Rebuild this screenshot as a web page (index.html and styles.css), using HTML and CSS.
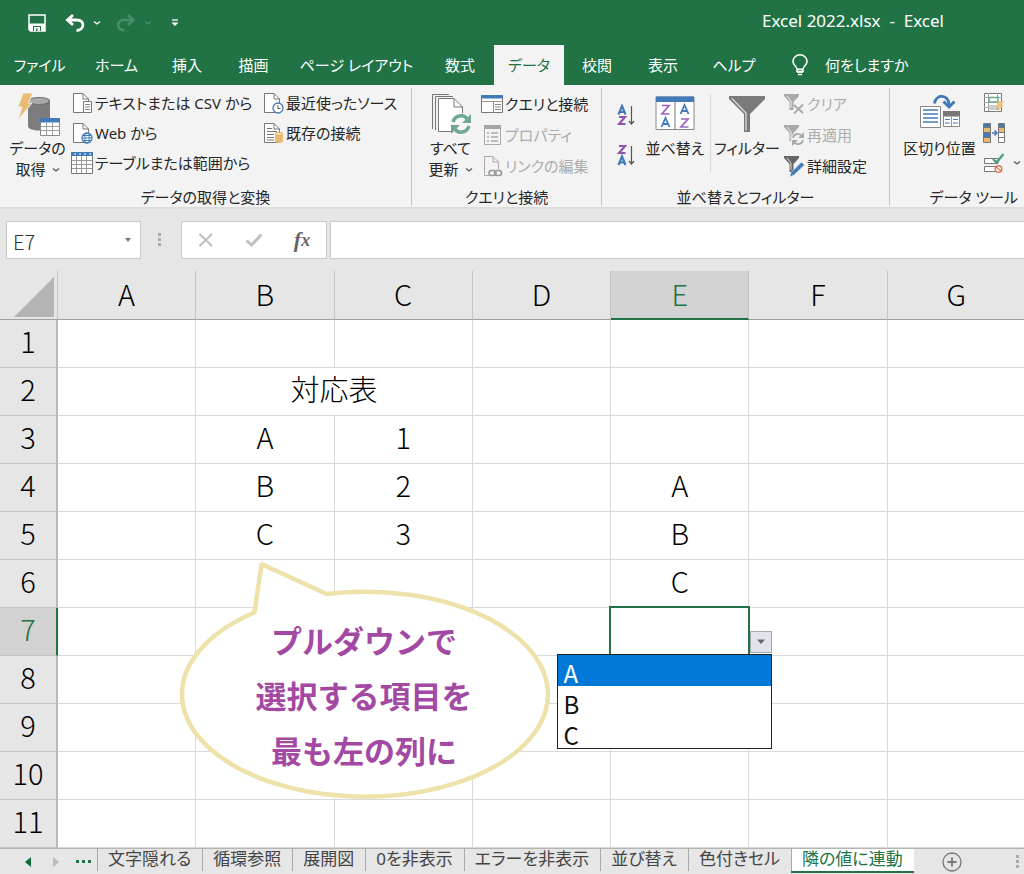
FILE: index.html
```html
<!DOCTYPE html>
<html lang="ja">
<head>
<meta charset="utf-8">
<meta name="viewport" content="width=device-width, initial-scale=1">
<title>Excel 2022.xlsx - Excel</title>
<link rel="stylesheet" href="styles.css">
</head>
<body>
<div class="app">
  <header class="titlebar">
    <div class="quick">
      <button class="plain" aria-label="上書き保存"><svg width="18" height="18" viewBox="0 0 18 18"><path d="M1 1H17V17H2.500L1 15.500Z" fill="none" stroke="#fff" stroke-width="1.500"/><path d="M1 10.500L2.500 9.500H15.500L17 10.500V17H2.500L1 15.500Z" fill="#fff"/><path d="M5 12H13V17H5Z" fill="#217346"/><path d="M6 13H12V17H9.500V14.500H8V17H6Z" fill="#fff"/></svg></button>
      <button class="plain undo" aria-label="元に戻す"><svg width="20" height="18" viewBox="0 0 20 18"><path d="M8 1L2.500 6L8 11M3 6H12C20 6 20 16 11.500 16.500" fill="none" stroke="#fff" stroke-width="2.800"/></svg><svg width="8" height="6" viewBox="0 0 8 6"><path d="M1 1.500L4 4L7 1.500" fill="none" stroke="#fff" stroke-width="1.300"/></svg></button>
      <button class="plain redo" aria-label="やり直し" disabled><svg width="20" height="18" viewBox="0 0 20 18"><path d="M12 1L17.500 6L12 11M17 6H8C0 6 0 16 8.500 16.500" fill="none" stroke="#4b8f6a" stroke-width="2.600"/></svg><svg width="8" height="6" viewBox="0 0 8 6"><path d="M1 1.500L4 4L7 1.500" fill="none" stroke="#4b8f6a" stroke-width="1.300"/></svg></button>
      <button class="plain" aria-label="クイック アクセス ツール バーのユーザー設定"><svg width="8" height="8" viewBox="0 0 8 8"><path d="M1 1H7" stroke="#fff" stroke-width="1.300"/><path d="M.5 3.500H7.500L4 7Z" fill="#fff"/></svg></button>
    </div>
    <h1 class="title">Excel 2022.xlsx&nbsp; -&nbsp; Excel</h1>
  </header>

  <nav class="tabs">
    <a href="#file">ファイル</a>
    <a href="#home">ホーム</a>
    <a href="#insert">挿入</a>
    <a href="#draw">描画</a>
    <a href="#layout">ページ レイアウト</a>
    <a href="#formula">数式</a>
    <a href="#data" class="current" aria-current="page">データ</a>
    <a href="#review">校閲</a>
    <a href="#view">表示</a>
    <a href="#help">ヘルプ</a>
    <a href="#tell" class="tell"><svg width="18" height="22" viewBox="0 0 18 22"><path d="M6 15.500C6 12 2 11.500 2 7.500A7 6.700 0 0 1 16 7.500C16 11.500 12 12 12 15.500V17.500H6ZM6 15.200H12" fill="none" stroke="#fff" stroke-width="1.500"/><path d="M6 18H12M7 20.500H11" stroke="#fff" stroke-width="1.500"/></svg>何をしますか</a>
  </nav>

  <section class="ribbon" aria-label="データ">
    <div class="group get">
      <div class="tools">
        <button class="big"><svg width="44" height="44" viewBox="0 0 44 44"><path d="M12 9V34C12 40 34 40 34 34V9Z" fill="#7c7c7c"/><ellipse cx="23" cy="9" rx="10.500" ry="3.500" fill="#a9a9a9" stroke="#6f6f6f" stroke-width="1.200"/><path d="M7 1H17L12.500 11H16L2 28L6 15H2Z" fill="#e9bb72" stroke="#f2f2f2"/><path d="M24.500 26.500H43.500V43.500H24.500Z" fill="#fff" stroke="#8a8a8a"/><path d="M24 26H44V30.500H24Z" fill="#437bb9"/><path d="M25 34.500H43M25 38.500H43M30.500 31V43M36.500 31V43" stroke="#a0a0a0"/></svg><span>データの<br>取得<svg class="chev" width="8" height="6" viewBox="0 0 8 6"><path d="M1 1.500L4 4L7 1.500" fill="none" stroke="#555" stroke-width="1.200"/></svg></span></button>
        <div class="list">
          <button><svg width="22" height="22" viewBox="0 0 22 22"><path d="M2.500 1.500H12L17.500 7V20.500H2.500Z" fill="#fff" stroke="#777"/><path d="M12 1.500V7H17.500" fill="none" stroke="#777"/><path d="M12.500 9.500H20.500V20.500H12.500Z" fill="#fff" stroke="#777"/><path d="M14 12.500H19M14 15H19M14 17.500H19" stroke="#888"/></svg>テキストまたは CSV から</button>
          <button><svg width="22" height="22" viewBox="0 0 22 22"><path d="M2.500 1.500H12L17.500 7V20.500H2.500Z" fill="#fff" stroke="#777"/><path d="M12 1.500V7H17.500" fill="none" stroke="#777"/><circle cx="16" cy="16" r="5" fill="#fff" stroke="#437bb9" stroke-width="1.300"/><ellipse cx="16" cy="16" rx="2.200" ry="5" fill="none" stroke="#437bb9"/><path d="M11 16H21M12 13.500H20M12 18.500H20" stroke="#437bb9"/></svg>Web から</button>
          <button><svg width="22" height="22" viewBox="0 0 22 22"><path d="M.5.500H21.500V21.500H.5Z" fill="#fff" stroke="#777"/><path d="M0 0H22V4H0Z" fill="#437bb9"/><path d="M1 8.500H21M1 12.500H21M1 16.500H21M5.500 4V21M10.500 4V21M15.500 4V21" stroke="#999"/><path d="M3 2H5M8 2H10M13 2H15M18 2H20" stroke="#fff"/></svg>テーブルまたは範囲から</button>
        </div>
        <div class="list">
          <button><svg width="22" height="22" viewBox="0 0 22 22"><path d="M2.500 1.500H12L17.500 7V20.500H2.500Z" fill="#fff" stroke="#777"/><path d="M12 1.500V7H17.500" fill="none" stroke="#777"/><circle cx="16" cy="16" r="5" fill="#fff" stroke="#437bb9" stroke-width="1.300"/><path d="M16 13V16.500H18.500" fill="none" stroke="#555"/></svg>最近使ったソース</button>
          <button><svg width="22" height="22" viewBox="0 0 22 22"><path d="M2.500 1.500H12L17.500 7V20.500H2.500Z" fill="#fff" stroke="#777"/><path d="M12 1.500V7H17.500M5 6.500H10M5 9.500H15M5 12.500H12M5 15.500H12M5 18H12" fill="none" stroke="#777"/><path d="M13 12V19C13 21.500 21 21.500 21 19V12Z" fill="#e9bb72"/><ellipse cx="17" cy="12" rx="4" ry="1.700" fill="#f6ddb1" stroke="#e2ae5e"/></svg>既存の接続</button>
        </div>
      </div>
      <h2>データの取得と変換</h2>
    </div>

    <div class="group queries">
      <div class="tools">
        <button class="big"><svg width="42" height="44" viewBox="0 0 42 44"><path d="M2.500 37V2.500H19M5.500 38V4.500H23" fill="none" stroke="#777"/><path d="M8.500 6.500H24L32.500 15V39.500H8.500Z" fill="#fff" stroke="#777"/><path d="M24 6.500V15H32.500" fill="none" stroke="#777"/><circle cx="31" cy="32" r="11" fill="#f7f7f7"/><path d="M23 30C25 23 34 22 37 27M39 34C37 41 28 42 25 37" fill="none" stroke="#70a991" stroke-width="3.500"/><path d="M41 22V31H32ZM21 42V33H30Z" fill="#70a991"/></svg><span>すべて<br>更新<svg class="chev" width="8" height="6" viewBox="0 0 8 6"><path d="M1 1.500L4 4L7 1.500" fill="none" stroke="#555" stroke-width="1.200"/></svg></span></button>
        <div class="list">
          <button><svg width="22" height="22" viewBox="0 0 22 22"><path d="M.5 2.500H21.500V19.500H.5Z" fill="#fff" stroke="#777"/><path d="M0 2H22V5.500H0Z" fill="#437bb9"/><path d="M12.500 9V19M1 8.500H21" stroke="#999"/><path d="M14 11.500H20M14 14H20M14 16.500H20" stroke="#888"/></svg>クエリと接続</button>
          <button disabled><svg width="22" height="22" viewBox="0 0 22 22"><path d="M3.500 1.500H19.500V20.500H3.500Z" fill="#f5f1f5" stroke="#aaa"/><path d="M3 1H20V5H3Z" fill="#a6a6a6"/><path d="M6 9H8M10 9H17M6 13H8M10 13H17M6 17H8M10 17H17" stroke="#aaa" stroke-width="1.300"/></svg>プロパティ</button>
          <button disabled><svg width="22" height="22" viewBox="0 0 22 22"><path d="M8 20.500H3.500V1.500H12L17.500 7V14" fill="#f5f1f5" stroke="#aaa"/><path d="M12 1.500V7H17.500" fill="none" stroke="#aaa"/><rect x="8" y="15.500" width="7" height="5" rx="2.500" fill="none" stroke="#999" stroke-width="1.600"/><rect x="13.500" y="15.500" width="7" height="5" rx="2.500" fill="none" stroke="#999" stroke-width="1.600"/></svg>リンクの編集</button>
        </div>
      </div>
      <h2>クエリと接続</h2>
    </div>

    <div class="group sort">
      <div class="tools">
        <div class="order">
          <button aria-label="昇順"><svg width="18" height="22" viewBox="0 0 18 22"><path d="M1.500 10.500L5 2L8.500 10.500M3 8H7" fill="none" stroke="#437bb9" stroke-width="2.200"/><path d="M2 13H8L2 20H8.500" fill="none" stroke="#8c55ab" stroke-width="2.200"/><path d="M14.500 2V20M12 17L14.500 20L17 17" fill="none" stroke="#555" stroke-width="1.200"/></svg></button>
          <button aria-label="降順"><svg width="18" height="22" viewBox="0 0 18 22"><path d="M2 2H8L2 9H8.500" fill="none" stroke="#8c55ab" stroke-width="2.200"/><path d="M1.500 21L5 12.500L8.500 21M3 18.500H7" fill="none" stroke="#437bb9" stroke-width="2.200"/><path d="M14.500 2V20M12 17L14.500 20L17 17" fill="none" stroke="#555" stroke-width="1.200"/></svg></button>
        </div>
        <button class="big"><svg width="40" height="42" viewBox="0 0 40 42"><path d="M1 3H39V35.500H1Z" fill="#fff" stroke="#888"/><path d="M1 2.500H39V8H1Z" fill="#437bb9"/><path d="M20 8V36" stroke="#777"/><path d="M7 11.500H14L7 20H14.500M26 25H33L26 33H33.500" fill="none" stroke="#9e63bb" stroke-width="1.700"/><path d="M6.500 33L10.500 24L14.500 33M8 30H13M25.500 20L29.500 11L33.500 20M27 17H32" fill="none" stroke="#437bb9" stroke-width="1.800"/></svg><span>並べ替え</span></button>
        <button class="big filter"><svg width="40" height="42" viewBox="0 0 40 42"><path d="M2 2H38V5L23 20V38H17V20L2 5Z" fill="#7a7a7a"/><path d="M5 4.500L19 19V36.500" fill="none" stroke="#d2d2d2" stroke-width="1.500"/></svg><span>フィルター</span></button>
        <div class="list">
          <button disabled><svg width="22" height="22" viewBox="0 0 22 22"><path d="M1 1H16V3L10.500 9V17H6.500V9L1 3Z" fill="#aaa"/><path d="M4 3L8 8V15" fill="none" stroke="#eee"/><path d="M11 12L20 20M20 11.500L11 20.500" stroke="#aaa" stroke-width="2"/></svg>クリア</button>
          <button disabled><svg width="22" height="22" viewBox="0 0 22 22"><path d="M1 1H16V3L10.500 9V17H6.500V9L1 3Z" fill="#aaa"/><path d="M4 3L8 8V15" fill="none" stroke="#eee"/><circle cx="15" cy="15" r="7" fill="#f3f3f3"/><path d="M10 14C11 9 17 9 18.500 12M20 16C19 21 13 21 11.500 18" fill="none" stroke="#aaa" stroke-width="1.800"/><path d="M21 8V14H15ZM9 22V16H15Z" fill="#aaa"/></svg>再適用</button>
          <button><svg width="22" height="22" viewBox="0 0 22 22"><path d="M1 1H16V3L10.500 9V17H6.500V9L1 3Z" fill="#666"/><path d="M4 3L8 8V15" fill="none" stroke="#ddd"/><path d="M18.500 7L21.500 10L11 20L6.500 22L8 17.500Z" fill="#437bb9" stroke="#f3f3f3" stroke-width=".6"/></svg>詳細設定</button>
        </div>
      </div>
      <h2>並べ替えとフィルター</h2>
    </div>

    <div class="group data">
      <div class="tools">
        <button class="big"><svg width="44" height="44" viewBox="0 0 44 44"><path d="M2.500 14.500H22.500V35.500H2.500Z" fill="#fff" stroke="#888"/><path d="M5 18H20M5 22H20M5 26H20M5 30H20" stroke="#437bb9" stroke-width="1.400"/><path d="M25.500 19.500H41.500V34.500H25.500Z" fill="#fff" stroke="#888"/><path d="M25 19H42V24.500H25Z" fill="#777"/><path d="M33.500 24V34" stroke="#999"/><path d="M27 27.500H32M27 31H32M35 27.500H40M35 31H40" stroke="#437bb9" stroke-width="1.200"/><path d="M16.500 11.500C18 2 30.500 1.500 31 13" fill="none" stroke="#437bb9" stroke-width="3"/><path d="M25.500 9.500L31 15L36.500 9.500" fill="none" stroke="#437bb9" stroke-width="3"/></svg><span>区切り位置</span></button>
        <div class="list icons">
          <button aria-label="フラッシュ フィル"><svg width="22" height="22" viewBox="0 0 22 22"><path d="M1.500 1.500H18.500V19.500H1.500Z" fill="#fff" stroke="#777"/><path d="M1 5.500H19M1 10.500H19M1 15.500H14M5.500 1V19M14.500 1V19" stroke="#aaa"/><path d="M6 5.500H15V10H6Z" fill="#fff" stroke="#70a991" stroke-width="1.500"/><path d="M6 13H14V18H6Z" fill="#ccc"/><path d="M15 9H21L18.500 13H21L13 21L15.500 15H13Z" fill="#efc478"/></svg></button>
          <button aria-label="重複の削除"><svg width="22" height="22" viewBox="0 0 22 22"><path d="M.5 1.500H7.500V20.500H.5ZM15.500 1.500H21.500V20.500H15.500Z" fill="#fff" stroke="#777"/><path d="M1 2H7V5H1ZM1 10H7V15H1ZM16 2H21V5H16Z" fill="#437bb9"/><path d="M1 6H7V10H1ZM1 16H7V20H1ZM16 6H21V10H16Z" fill="#e9bb72"/><path d="M0 5.500H8M0 10.500H8M0 15.500H8M15 5.500H22M15 10.500H22M15 15.500H22" stroke="#777"/><path d="M9 11H14M11.500 8.500L14 11L11.500 13.500" fill="none" stroke="#437bb9" stroke-width="1.500"/></svg></button>
          <button aria-label="データの入力規則"><svg width="22" height="22" viewBox="0 0 22 22"><path d="M1.500 6.500H15V11.500H1.500ZM1.500 14.500H13V19.500H1.500Z" fill="#fff" stroke="#777"/><path d="M10 7L13.500 10.500L20.500 2" fill="none" stroke="#4aa179" stroke-width="2.400"/><circle cx="15.500" cy="17" r="3.300" fill="#fff" stroke="#dc7358" stroke-width="1.500"/><path d="M13 15L18 19" stroke="#dc7358" stroke-width="1.500"/></svg><svg class="more" width="8" height="6" viewBox="0 0 8 6"><path d="M1 1.500L4 4L7 1.500" fill="none" stroke="#555" stroke-width="1.200"/></svg></button>
        </div>
      </div>
      <h2>データ ツール</h2>
    </div>
  </section>

  <section class="formula-bar">
    <div class="name-box"><input type="text" value="E7" aria-label="名前ボックス"><button class="plain" aria-label="名前の一覧"><svg width="8" height="5" viewBox="0 0 8 5"><path d="M1 0H7L4 4Z" fill="#777"/></svg></button></div>
    <svg class="grip" width="4" height="16" viewBox="0 0 4 16"><path d="M0 1H3V4H0ZM0 6H3V9H0ZM0 11H3V14H0Z" fill="#aaa"/></svg>
    <div class="entry">
      <button class="plain" aria-label="キャンセル"><svg width="16" height="16" viewBox="0 0 16 16"><path d="M1.500 2L14 14M14 2L1.500 14" stroke="#c0c0c0" stroke-width="2.200"/></svg></button>
      <button class="plain" aria-label="入力"><svg width="18" height="16" viewBox="0 0 18 16"><path d="M1.500 8.500L6.500 13L16.500 2.500" fill="none" stroke="#c0c0c0" stroke-width="3"/></svg></button>
      <button class="plain fx" aria-label="関数の挿入">f<sub>x</sub></button>
    </div>
    <input class="formula" type="text" aria-label="数式バー">
  </section>

  <main class="sheet">
    <table>
      <colgroup><col class="numbers"><col><col><col><col><col><col><col></colgroup>
      <thead><tr><th class="corner"><svg width="42" height="42" viewBox="0 0 42 42"><path d="M41 1V41H1Z" fill="#b4b4b4"/></svg></th><th>A</th><th>B</th><th>C</th><th>D</th><th class="on">E</th><th>F</th><th>G</th></tr></thead>
      <tbody>
        <tr><th>1</th><td></td><td></td><td></td><td></td><td></td><td></td><td></td></tr>
        <tr><th>2</th><td></td><td colspan="2">対応表</td><td></td><td></td><td></td><td></td></tr>
        <tr><th>3</th><td></td><td>A</td><td>1</td><td></td><td></td><td></td><td></td></tr>
        <tr><th>4</th><td></td><td>B</td><td>2</td><td></td><td>A</td><td></td><td></td></tr>
        <tr><th>5</th><td></td><td>C</td><td>3</td><td></td><td>B</td><td></td><td></td></tr>
        <tr><th>6</th><td></td><td></td><td></td><td></td><td>C</td><td></td><td></td></tr>
        <tr><th class="on">7</th><td></td><td></td><td></td><td></td>
          <td class="selected"><button class="drop" aria-label="リストを開く"><svg width="10" height="6" viewBox="0 0 10 6"><path d="M1 .5H9L5 5Z" fill="#666"/></svg></button><select class="choices" size="3" aria-label="項目"><option selected>A</option><option>B</option><option>C</option></select></td><td></td><td></td></tr>
        <tr><th>8</th><td></td><td></td><td></td><td></td><td></td><td></td><td></td></tr>
        <tr><th>9</th><td></td><td></td><td></td><td></td><td></td><td></td><td></td></tr>
        <tr><th>10</th><td></td><td></td><td></td><td></td><td></td><td></td><td></td></tr>
        <tr><th>11</th><td></td><td></td><td></td><td></td><td></td><td></td><td></td></tr>
      </tbody>
    </table>
    <aside class="callout">
      <svg width="378" height="246" viewBox="0 0 378 246"><path d="M86.500 6L151.500 36A183 102.500 0 1 1 79.500 54.500Z" fill="#fff" stroke="#eee2ab" stroke-width="4.500" stroke-linejoin="bevel"/></svg>
      <p>プルダウンで<br>選択する項目を<br>最も左の列に</p>
    </aside>
  </main>

  <footer class="sheets">
    <div class="arrows">
      <button class="plain" aria-label="前のシート"><svg width="8" height="12" viewBox="0 0 8 12"><path d="M7 1V11L1 6Z" fill="#0e6b38"/></svg></button>
      <button class="plain" aria-label="次のシート" disabled><svg width="8" height="12" viewBox="0 0 8 12"><path d="M1 1V11L7 6Z" fill="#bbb"/></svg></button>
      <button class="plain" aria-label="ほかのシート"><svg width="15" height="4" viewBox="0 0 15 4"><path d="M0 0H3V3H0ZM6 0H9V3H6ZM12 0H15V3H12Z" fill="#217346"/></svg></button>
    </div>
    <nav>
      <a href="#s1">文字隠れる</a><a href="#s2">循環参照</a><a href="#s3">展開図</a><a href="#s4">0を非表示</a><a href="#s5">エラーを非表示</a><a href="#s6">並び替え</a><a href="#s7">色付きセル</a><a href="#s8" class="current" aria-current="page">隣の値に連動</a>
    </nav>
    <button class="plain add" aria-label="新しいシート"><svg width="20" height="20" viewBox="0 0 20 20"><circle cx="10" cy="10" r="9" fill="none" stroke="#777" stroke-width="1.300"/><path d="M10 5.500V14.500M5.500 10H14.500" stroke="#777" stroke-width="1.800"/></svg></button>
    <svg class="grip" width="4" height="16" viewBox="0 0 4 16"><path d="M0 1H3V4H0ZM0 6H3V9H0ZM0 11H3V14H0Z" fill="#aaa"/></svg>
  </footer>
</div>
</body>
</html>
```
FILE: styles.css
```css
* { box-sizing: border-box; }
body {
  margin: 0;
  background: #e6e6e6;
  color: #262626;
  font-family: "Noto Sans", "Noto Sans CJK JP", sans-serif;
  font-size: 15px;
  font-feature-settings: "palt";
}
.app { overflow: hidden; }
button, input, select { font: inherit; font-feature-settings: inherit; color: inherit; }
button { border: 0; padding: 0; background: none; }
button svg, a svg { flex: none; display: block; }
a { color: inherit; text-decoration: none; white-space: nowrap; }
h1, h2, p { margin: 0; font-size: inherit; font-weight: 400; }
.plain { display: flex; align-items: center; justify-content: center; }

.titlebar {
  display: flex;
  align-items: center;
  justify-content: space-between;
  height: 45px;
  padding: 0 80px 0 28px;
  background: #217346;
  color: #fff;
}
.quick { display: flex; align-items: center; gap: 19px; }
.quick .plain { gap: 8px; }
.quick .undo { margin-right: -4px; }
.title { font-size: 17px; line-height: 40px; padding-bottom: 3px; white-space: pre; }

.tabs {
  display: grid;
  grid-template-columns: 79px 75px 66px 67px 139px 68px 70px 66px 66px 76px 1fr;
  height: 40px;
  background: #217346;
  color: #fff;
  line-height: 40px;
  text-align: center;
}
.tabs .current { background: #f3f3f3; color: #217346; }
.tabs .tell { display: flex; align-items: center; gap: 16px; padding: 0 19px; }

.ribbon {
  display: grid;
  grid-template-columns: 411px 190px 288px 1fr;
  height: 124px;
  padding: 3px 0 0;
  background: #f3f3f3;
  border-bottom: 2px solid #dcdcdc;
  line-height: 20px;
}
.group { display: flex; flex-direction: column; min-width: 0; margin-bottom: 4px; }
.group + .group { border-left: 1px solid #c4c4c4; }
.group h2 { text-align: center; line-height: 18px; white-space: nowrap; }
.tools { display: flex; height: 100px; flex: none; }
.big { display: flex; flex-direction: column; align-items: center; flex: none; padding-top: 4px; white-space: nowrap; }
.big span { line-height: 21px; padding-top: 2px; }
.big .chev { display: inline-block; margin-left: 6px; vertical-align: 2px; }
.list { display: flex; flex-direction: column; align-items: flex-start; gap: 8px; padding-top: 4px; flex: none; }
.list button { display: flex; align-items: center; gap: 2px; height: 22px; white-space: nowrap; }
.list button:disabled { color: #acacac; }
.get .big { width: 71px; padding-left: 4px; }
.get .list { width: 191px; }
.queries .big { width: 69px; padding-left: 8px; }
.queries .list, .sort .list { gap: 9px; padding-top: 5px; }
.order { display: flex; flex-direction: column; gap: 18px; width: 38px; padding: 16px 0 0 15px; }
.sort .big { width: 70px; padding-top: 6px; }
.sort .filter { width: 73px; height: 78px; margin-top: 6px; padding-top: 0; border-left: 1px solid #d4d4d4; }
.data .big { width: 93px; padding-left: 6px; }
.icons .more { margin-left: 6px; }
.data h2 { text-align: right; padding-right: 6px; }

.formula-bar { display: flex; align-items: center; height: 62px; padding: 0 0 0 6px; }
.name-box, .entry, .formula { height: 38px; background: #fff; border: 1px solid #cacaca; }
.name-box { display: flex; width: 135px; }
.name-box input { flex: 1; min-width: 0; border: 0; padding: 2px 6px 0; background: none; font-size: 20px; font-family: "Noto Sans CJK JP", sans-serif; font-weight: 300; color: #333; }
.name-box .plain { width: 24px; }
.formula-bar .grip { margin: 0 19px 0 17px; }
.entry { display: flex; width: 146px; }
.entry .plain { flex: 1; }
.fx { font: italic 700 22px "Liberation Serif", serif; color: #666; }
.fx sub { font-size: 18px; vertical-align: -2px; }
.formula { flex: 1; min-width: 0; margin-left: 3px; border-right: 0; padding: 0 8px; }

.sheet { position: relative; }
table {
  width: calc(100% + 2px);
  table-layout: fixed;
  border-spacing: 0;
  background: #fff;
  color: #000;
  font-family: "Noto Sans CJK JP", sans-serif;
  font-size: 29px;
  font-weight: 300;
  line-height: 40px;
  text-align: center;
}
.numbers { width: 58px; }
tr { height: 48px; }
th, td { padding: 0 0 7px; border: solid #d9d9d9; border-width: 0 1px 1px 0; }
th { background: #e6e6e6; font-weight: 300; }
thead th { height: 49px; padding-bottom: 4px; border-right-color: #c4c4c4; border-bottom-color: #a0a0a0; }
tbody th { border-color: #c4c4c4; border-right: 2px solid #b8b8b8; }
.corner svg { display: block; margin: 4px 0 0 13px; }
thead .corner { padding: 0; }
th.on { background: #d2d2d2; color: #217346; }
thead .on { border-bottom: 2px solid #217346; }
tbody .on { border-right: 2px solid #217346; }
.selected { position: relative; }
.selected::before { content: ""; position: absolute; inset: -2px; border: 2px solid #217346; }
.drop {
  position: absolute;
  left: calc(100% + 2px);
  top: 23px;
  display: flex;
  align-items: center;
  justify-content: center;
  width: 22px;
  height: 22px;
  background: #e1e4ea;
  border: 1px solid #a6a8ae;
}
.choices {
  position: absolute;
  right: -24px;
  top: 46px;
  z-index: 1;
  width: 215px;
  height: 95px;
  padding: 0;
  overflow: hidden;
  background: #fff;
  border: 1px solid #222;
  border-radius: 0;
  outline: 0;
  color: #111;
  font-family: "Noto Sans CJK JP", sans-serif;
  font-size: 24px;
  font-weight: 350;
}
.choices option { height: 31px; min-height: 31px; padding: 0 5px; line-height: 26px; }
.choices option:checked { background: #0078d7 linear-gradient(#0078d7, #0078d7); color: #fff; }

.callout { position: absolute; left: 175px; top: 287px; width: 378px; }
.callout svg { display: block; }
.callout p {
  position: absolute;
  inset: 54px 0 auto;
  color: #a349a4;
  font: 700 31px/55px "Noto Sans CJK JP", sans-serif;
  font-feature-settings: normal;
  text-align: center;
}

.sheets { display: flex; height: 27px; border-top: 1px solid #b4b4b4; color: #444; font-size: 17px; line-height: 20px; }
.arrows { display: flex; align-items: center; gap: 20px; width: 97px; padding-left: 24px; flex: none; }
.arrows .plain:last-child { margin-left: -4px; }
.sheets nav { display: flex; }
.sheets nav a { height: 22px; padding: 0 11px; box-shadow: inset 1px 0 #a8a8a8; }
.sheets nav .current { height: 24px; background: #fff; color: #217346; border-bottom: 2px solid #217346; }
.add { margin: 0 auto 0 28px; }
.sheets .grip { margin: 5px 4px 0 0; }
```
